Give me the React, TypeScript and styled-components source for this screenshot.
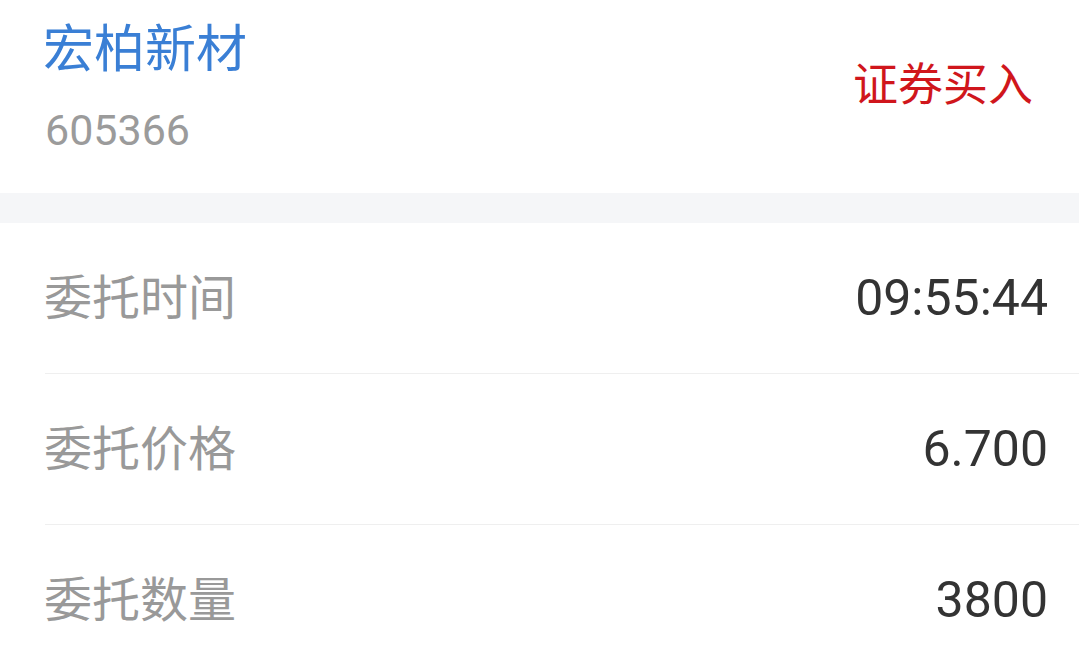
import React from 'react';
import styled, { createGlobalStyle } from 'styled-components';

const GlobalStyle = createGlobalStyle`
  html, body {
    margin: 0;
    padding: 0;
    background: #ffffff;
  }
  body {
    font-family: Roboto, "Noto Sans CJK SC", sans-serif;
  }
`;

const rows = [
  { label: '委托时间', value: '09:55:44' },
  { label: '委托价格', value: '6.700' },
  { label: '委托数量', value: '3800' },
];

export default function App() {
  return (
    <Page>
      <GlobalStyle />
      <Header>
        <StockInfo>
          <StockName>宏柏新材</StockName>
          <StockCode>605366</StockCode>
        </StockInfo>
        <TradeType>证券买入</TradeType>
      </Header>
      <Gap />
      <List>
        {rows.map((row) => (
          <Row key={row.label}>
            <Label>{row.label}</Label>
            <Value>{row.value}</Value>
          </Row>
        ))}
      </List>
    </Page>
  );
}

const Page = styled.div`
  width: 1079px;
  height: 647px;
  overflow: hidden;
  background: #ffffff;
`;

const Header = styled.div`
  height: 193px;
  box-sizing: border-box;
  display: flex;
  align-items: flex-start;
  justify-content: space-between;
  padding: 10px 46px 0 45px;
`;

const StockInfo = styled.div`
  display: flex;
  flex-direction: column;
`;

const StockName = styled.div`
  font-family: "Noto Sans CJK SC", sans-serif;
  font-size: 51px;
  line-height: 70px;
  color: #3a7fd5;
  margin-left: -2px;
`;

const StockCode = styled.div`
  font-family: Roboto, sans-serif;
  font-size: 43px;
  line-height: 56px;
  color: #9b9b9b;
  margin-top: 22px;
`;

const TradeType = styled.div`
  font-family: "Noto Sans CJK SC", sans-serif;
  font-size: 45px;
  line-height: 60px;
  color: #d0161c;
  margin-top: 42px;
`;

const Gap = styled.div`
  height: 30px;
  background: #f5f6f8;
`;

const List = styled.div`
  display: flex;
  flex-direction: column;
`;

const Row = styled.div`
  height: 150px;
  display: flex;
  align-items: center;
  justify-content: space-between;
  padding-right: 31px;
  margin-left: 45px;
  border-bottom: 1px solid #efefef;
`;

const Label = styled.div`
  font-family: "Noto Sans CJK SC", sans-serif;
  font-size: 48px;
  line-height: 60px;
  color: #999999;
  margin-left: -1px;
  padding-bottom: 8px;
`;

const Value = styled.div`
  font-family: Roboto, sans-serif;
  font-size: 50px;
  line-height: 60px;
  color: #333333;
`;
